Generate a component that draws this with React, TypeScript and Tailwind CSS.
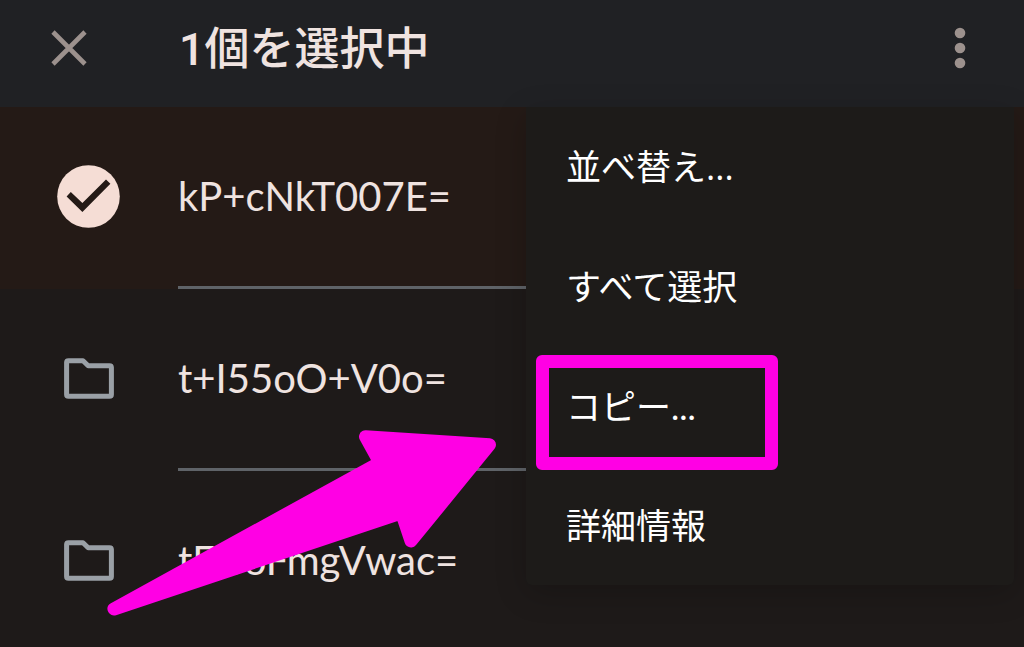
type FileEntry = { name: string; selected?: boolean };

const files: FileEntry[] = [
  { name: 'kP+cNkT007E=', selected: true },
  { name: 't+I55oO+V0o=' },
  { name: 'tFGoFmgVwac=' },
];

const actions = [
  { label: '並べ替え...', font: "font-['Open_Sans','Noto_Sans_CJK_JP',sans-serif]" },
  { label: 'すべて選択' },
  { label: 'コピー...', highlighted: true },
  { label: '詳細情報' },
];

function CloseIcon() {
  return (
    <svg viewBox="0 0 36 36" className="size-9" fill="none" stroke="currentColor" strokeWidth="4.6" aria-hidden="true">
      <path d="M2 2 34 34M34 2 2 34" />
    </svg>
  );
}

function MoreIcon() {
  return (
    <svg viewBox="0 0 12 42" className="h-[42px] w-3" fill="currentColor" aria-hidden="true">
      <circle cx="6" cy="6" r="5.3" />
      <circle cx="6" cy="21" r="5.3" />
      <circle cx="6" cy="36" r="5.3" />
    </svg>
  );
}

function SelectedIcon() {
  return (
    <svg viewBox="0 0 63 63" className="size-[63px]" aria-hidden="true">
      <circle cx="31.5" cy="31.5" r="31.3" fill="#f5ddd5" />
      <path d="M9.6 31.4 13.8 27 25.4 38 49 14.6 53.4 18.8 25.4 47Z" fill="#241a16" />
    </svg>
  );
}

function FolderIcon() {
  return (
    <svg viewBox="0 0 50 41" className="h-[41px] w-[50px]" fill="none" stroke="#9aa0a6" strokeWidth="5" strokeLinejoin="round" aria-hidden="true">
      <path d="M4.5 2.7H19L24.2 7.7H45.5Q47.4 7.7 47.4 9.6V36.4Q47.4 38.3 45.5 38.3H4.5Q2.6 38.3 2.6 36.4V4.6Q2.6 2.7 4.5 2.7Z" />
    </svg>
  );
}

function Arrow() {
  return (
    <svg
      viewBox="107 430 390 186"
      className="pointer-events-none absolute left-[107px] top-[430px] h-[186px] w-[390px]"
      fill="#ff00e4"
      stroke="#ff00e4"
      strokeWidth="13"
      strokeLinejoin="round"
      aria-hidden="true"
    >
      <path d="M365.5 436.7 489.5 444.7 411 541 401.6 512.9 114 609 379.8 462.6Z" />
    </svg>
  );
}

export default function App() {
  return (
    <div className="relative h-screen overflow-hidden bg-[#1e1a19] font-['Lato','Noto_Sans_CJK_JP',sans-serif] text-[#efe3e0]">
      <header className="flex h-[107px] items-center bg-[#202124] pb-3 pl-[51px] pr-[58px]">
        <button type="button" aria-label="閉じる" className="text-[#9c918d]">
          <CloseIcon />
        </button>
        <h1 className="ml-[92px] flex-1 pt-1 font-['Roboto','Noto_Sans_CJK_JP',sans-serif] text-[45px] font-medium leading-[60px]">1個を選択中</h1>
        <button type="button" aria-label="その他" className="text-[#9c918d]">
          <MoreIcon />
        </button>
      </header>

      <ul>
        {files.map((file) => (
          <li key={file.name} className={file.selected ? 'bg-[#241a16]' : ''}>
            <button type="button" aria-pressed={!!file.selected} className="flex h-[182px] w-full items-stretch pr-12 text-left">
              <span className="flex w-[178px] items-center justify-center pb-[3px] pr-px">
                {file.selected ? <SelectedIcon /> : <FolderIcon />}
              </span>
              <span className="flex flex-1 items-center border-b-[3px] border-[#5f6368] pb-0.5 text-[40px] leading-[48px]">{file.name}</span>
            </button>
          </li>
        ))}
      </ul>

      <div
        role="menu"
        className="absolute right-[10px] top-[107px] flex h-[478px] w-[488px] flex-col rounded-b-md bg-[#1d1b19] text-white shadow-[0_8px_32px_rgba(0,0,0,0.2)]"
      >
        {actions.map((action) => (
          <button
            key={action.label}
            type="button"
            role="menuitem"
            className={`relative flex-1 pl-10 text-left text-[35px] leading-[48px] ${action.font ?? ''}`}
          >
            {action.label}
            {action.highlighted && (
              <span className="pointer-events-none absolute left-[10px] top-[9px] h-[115px] w-[242px] rounded-md border-[13px] border-[#ff00e4]" />
            )}
          </button>
        ))}
      </div>

      <Arrow />
    </div>
  );
}
